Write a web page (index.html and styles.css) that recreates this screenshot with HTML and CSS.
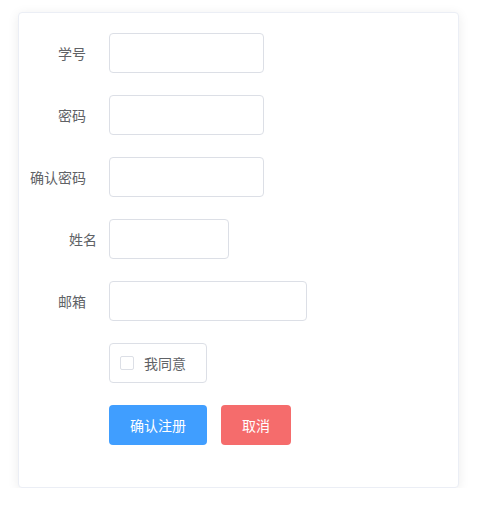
FILE: index.html
```html
<!DOCTYPE html>
<html>
<head>
<meta charset="utf-8">
<link rel="stylesheet" href="styles.css">
</head>
<body>
<div class="page">
  <div class="card">
    <form class="form">
      <div class="item">
        <label class="label pad-wide">学号</label>
        <div class="content"><input class="input w155" type="text"></div>
      </div>
      <div class="item">
        <label class="label pad-wide">密码</label>
        <div class="content"><input class="input w155" type="password"></div>
      </div>
      <div class="item">
        <label class="label pad-wide">确认密码</label>
        <div class="content"><input class="input w155" type="password"></div>
      </div>
      <div class="item">
        <label class="label">姓名</label>
        <div class="content"><input class="input w120" type="text"></div>
      </div>
      <div class="item">
        <label class="label pad-wide">邮箱</label>
        <div class="content"><input class="input w198" type="text"></div>
      </div>
      <div class="item">
        <div class="label"></div>
        <div class="content">
          <label class="checkbox">
            <span class="box"></span>
            <span class="check-text">我同意</span>
          </label>
        </div>
      </div>
      <div class="item">
        <div class="label"></div>
        <div class="content buttons">
          <button type="button" class="btn primary">确认注册</button>
          <button type="button" class="btn danger">取消</button>
        </div>
      </div>
    </form>
  </div>
</div>
</body>
</html>
```
FILE: styles.css
```css
* { box-sizing: border-box; }
html, body { margin: 0; padding: 0; background: #fff; }
body {
  font-family: "Noto Sans CJK SC", "Noto Sans", sans-serif;
  font-size: 14px;
  color: #606266;
}
.page {
  padding: 12px 0 0 18px;
}
.card {
  width: 441px;
  height: 476px;
  border: 1px solid #ebeef5;
  border-radius: 4px;
  background: #fff;
  box-shadow: 0 2px 12px 0 rgba(0, 0, 0, 0.08);
  padding: 20px;
}
.form { margin: 0; }
.item {
  display: flex;
  align-items: flex-start;
  margin-bottom: 22px;
  height: 40px;
}
.label {
  width: 70px;
  flex: none;
  display: flex;
  justify-content: flex-end;
  line-height: 40px;
  padding-right: 12px;
  color: #606266;
  white-space: nowrap;
}
.label.pad-wide { padding-right: 23px; }
.content { flex: 1; display: flex; }
.input {
  height: 40px;
  border: 1px solid #dcdfe6;
  border-radius: 4px;
  background: #fff;
  padding: 0 15px;
  outline: none;
  font: inherit;
  color: #606266;
}
.w155 { width: 155px; }
.w120 { width: 120px; }
.w198 { width: 198px; }
.checkbox {
  display: flex;
  align-items: center;
  height: 40px;
  width: 98px;
  border: 1px solid #dcdfe6;
  border-radius: 4px;
  padding: 0 20px 0 10px;
  cursor: pointer;
}
.box {
  width: 14px;
  height: 14px;
  border: 1px solid #dcdfe6;
  border-radius: 2px;
  background: #fff;
  flex: none;
}
.check-text {
  padding-left: 10px;
  color: #606266;
  white-space: nowrap;
}
.buttons { gap: 14px; }
.btn {
  height: 40px;
  border: none;
  border-radius: 4px;
  color: #fff;
  font: inherit;
  font-size: 14px;
  padding: 0;
  cursor: pointer;
}
.primary { background: #409eff; width: 98px; }
.danger { background: #f56c6c; width: 70px; }
```
